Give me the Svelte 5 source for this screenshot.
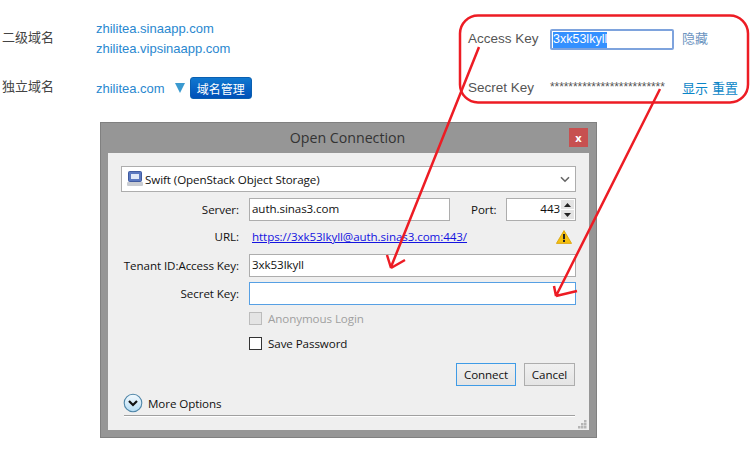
<script>
  const secret = '*'.repeat(25);
</script>

<div class="page">
  <div class="top">
    <div class="domains">
      <div class="dlabel first">二级域名</div>
      <div class="dvalues">
        <a href="#a">zhilitea.sinaapp.com</a>
        <a href="#b">zhilitea.vipsinaapp.com</a>
      </div>
      <div class="dlabel second">独立域名</div>
      <div class="dvalue2">
        <a href="#c">zhilitea.com</a>
        <span class="tri"></span>
        <button class="manage">域名管理</button>
      </div>
    </div>
    <div class="keys">
      <div class="krow one">
        <span class="kl">Access Key</span>
        <div class="kinput"><span class="sel">3xk53lkyll</span></div>
        <a class="muted" href="#h">隐藏</a>
      </div>
      <div class="krow two">
        <span class="kl">Secret Key</span>
        <span class="stars">{secret}</span>
        <a class="blue" href="#s">显示</a>
        <a class="blue reset" href="#r">重置</a>
      </div>
    </div>
  </div>

  <div class="dialog">
    <div class="titlebar">
      <span class="title">Open Connection</span>
      <span class="close">x</span>
    </div>
    <div class="content">
      <div class="select">
        <svg class="disk" width="18" height="16" viewBox="0 0 18 16">
          <rect x="2.5" y="0.5" width="13" height="10" rx="1" fill="#5a78c0" stroke="#3f5aa0"/>
          <rect x="5" y="3" width="8" height="5" fill="#dfe8f8"/>
          <rect x="1" y="11" width="16" height="4" rx="1" fill="#c9ccd2"/>
        </svg>
        <span>Swift (OpenStack Object Storage)</span>
        <svg class="chev" width="10" height="7" viewBox="0 0 10 7"><path d="M1 1.2 5 5.2 9 1.2" fill="none" stroke="#666" stroke-width="1.6"/></svg>
      </div>

      <div class="form">
        <div class="lbl">Server:</div>
        <div class="serverline">
          <div class="field server">auth.sinas3.com</div>
          <span class="portl">Port:</span>
          <div class="field port">
            <span class="pnum">443</span>
            <span class="spin">
              <span class="sb"><svg width="7" height="4" viewBox="0 0 7 4"><path d="M3.5 0 7 4H0z" fill="#222"/></svg></span>
              <span class="sb"><svg width="7" height="4" viewBox="0 0 7 4"><path d="M0 0h7L3.5 4z" fill="#222"/></svg></span>
            </span>
          </div>
        </div>

        <div class="lbl urlr">URL:</div>
        <div class="urlline urlr">
          <a href="#u">https://3xk53lkyll@auth.sinas3.com:443/</a>
          <svg width="16" height="14" viewBox="0 0 16 14">
            <path d="M8 .6 15.6 13.4H.4z" fill="#f5c010" stroke="#d8a000" stroke-width=".8" stroke-linejoin="round"/>
            <rect x="7" y="4" width="2" height="5.2" fill="#222"/>
            <rect x="7" y="10" width="2" height="2" fill="#222"/>
          </svg>
        </div>

        <div class="lbl r3">Tenant ID:Access Key:</div>
        <div class="field r3">3xk53lkyll</div>

        <div class="lbl r4">Secret Key:</div>
        <div class="field focus r4"></div>

        <div class="check dis r5"><span class="box"></span>Anonymous Login</div>
        <div class="check r6"><span class="box"></span>Save Password</div>
      </div>

      <div class="actions">
        <button class="btn primary">Connect</button>
        <button class="btn">Cancel</button>
      </div>

      <div class="more">
        <svg width="20" height="20" viewBox="0 0 20 20">
          <defs>
            <linearGradient id="mo" x1="0" y1="0" x2="0" y2="1">
              <stop offset="0" stop-color="#f4fafe"/>
              <stop offset="1" stop-color="#b5dcf4"/>
            </linearGradient>
          </defs>
          <circle cx="10" cy="10" r="8.8" fill="url(#mo)" stroke="#4f86a8" stroke-width="1.1"/>
          <path d="M6 8 10 12 14 8" fill="none" stroke="#111" stroke-width="2.2"/>
        </svg>
        <span>More Options</span>
      </div>
      <div class="rule"></div>
      <svg class="grip" width="9" height="9" viewBox="0 0 9 9" fill="#b5b5b5">
        <rect x="6" y="0" width="2.5" height="2.5"/>
        <rect x="3" y="3" width="2.5" height="2.5"/><rect x="6" y="3" width="2.5" height="2.5"/>
        <rect x="0" y="6" width="2.5" height="2.5"/><rect x="3" y="6" width="2.5" height="2.5"/><rect x="6" y="6" width="2.5" height="2.5"/>
      </svg>
    </div>
  </div>

  <svg class="notes" width="756" height="450" viewBox="0 0 756 450" fill="none" stroke="#ed1c24" stroke-width="2.5">
    <rect x="460" y="15.5" width="288" height="87" rx="18"/>
    <path d="M479 47 391 267M391 268 405 260M391 268 387 255"/>
    <path d="M660 89 556 296M556 296 577 291M556 296 554 286"/>
  </svg>
</div>

<style>
  :global(body) { margin: 0; background: #fff; }
  .page { position: relative; width: 756px; height: 450px; overflow: hidden; font-family: "Liberation Sans", "Noto Sans CJK SC", sans-serif; }
  a { text-decoration: none; }

  .top { display: flex; height: 122px; }
  .domains { width: 466px; margin-left: 2px; padding-top: 19px; box-sizing: border-box; display: grid; grid-template-columns: 94px 1fr; grid-template-rows: 40px 46px; row-gap: 0; align-content: start; }
  .dlabel { font-size: 13px; color: #444; white-space: nowrap; }
  .dlabel.first { padding-top: 10px; line-height: 18px; }
  .dlabel.second { padding-top: 19px; line-height: 18px; }
  .dvalues { display: flex; flex-direction: column; gap: 4px; font-size: 13px; line-height: 16px; padding-top: 2px; }
  .dvalues a, .dvalue2 a { color: #2a88cf; }
  .dvalue2 { display: flex; align-items: center; font-size: 13px; padding-top: 12px; }
  .tri { width: 0; height: 0; margin-left: 10px; border-left: 5.5px solid transparent; border-right: 5.5px solid transparent; border-top: 10px solid #3b9ad0; }
  .manage { margin-left: 5px; width: 62px; height: 22px; padding: 0; border: 1px solid #0a5fb0; border-radius: 3px; background: linear-gradient(#1078d0, #0050b8); color: #fff; font: 12px "Noto Sans CJK SC", sans-serif; }

  .keys { font-size: 13.5px; color: #555; }
  .krow { display: flex; align-items: center; height: 22px; }
  .krow.one { margin-top: 28px; }
  .krow.two { margin-top: 27px; }
  .kl { width: 82px; margin-top: -2px; }
  .kinput { width: 124px; height: 21px; box-sizing: border-box; border: 2px solid #7ea3dd; border-radius: 2px; padding: 1px 0 0 1px; line-height: 15px; font-size: 12.5px; }
  .sel { background: #3390ff; color: #fff; display: inline-block; height: 16px; }
  .muted { margin-left: 8px; margin-top: -3px; font-size: 13px; color: #6c94bf; }
  .stars { width: 132px; font-size: 12px; color: #555; height: 14px; line-height: 14px; margin-top: -3px; letter-spacing: -.08px; }
  .blue { font-size: 13px; color: #0a85c7; margin-top: -2px; }
  .reset { margin-left: 4px; }

  .dialog { margin-left: 100px; width: 497px; height: 316px; box-sizing: border-box; border: 1px solid #808080; background: #969696; display: flex; flex-direction: column; font-family: "Open Sans", "Noto Sans", sans-serif; font-size: 11.6px; letter-spacing: -.08px; color: #111; white-space: nowrap; }
  .titlebar { height: 30px; flex: none; position: relative; display: flex; justify-content: center; align-items: center; }
  .title { font-size: 14.2px; letter-spacing: 0; color: #333; margin-left: -2px; margin-top: -1px; }
  .close { position: absolute; right: 8px; top: 5px; width: 19px; height: 19px; background: #c75050; color: #fff; font-size: 11px; font-weight: 700; display: flex; align-items: center; justify-content: center; line-height: 1; }
  .content { position: relative; flex: none; width: 481px; height: 277px; margin-left: 7px; box-sizing: border-box; padding: 13px 13px 0; background: #efefef; }

  .select { display: flex; align-items: center; height: 26px; box-sizing: border-box; border: 1px solid #adadad; background: #fff; padding: 0 4px 0 4px; }
  .disk { margin-right: 1px; }
  .select span { flex: 1; }
  .chev { margin-right: 1px; }

  .form { display: grid; grid-template-columns: 118px 1fr; column-gap: 10px; margin-top: 6px; align-items: center; }
  .lbl { text-align: right; }
  .field { height: 23px; box-sizing: border-box; border: 1px solid #adadad; background: #fff; padding-left: 2px; line-height: 20px; }
  .field.focus { border-color: #56a0e4; }
  .serverline { display: flex; align-items: center; }
  .server { width: 201px; }
  .portl { margin-left: 21px; width: 35px; }
  .port { width: 70px; display: flex; justify-content: flex-end; padding-left: 0; }
  .pnum { margin-right: 1px; }
  .spin { display: flex; flex-direction: column; gap: 1px; padding: 1px 1px 0 0; }
  .sb { width: 13px; height: 9px; background: #e4e4e4; display: flex; align-items: center; justify-content: center; }
  .urlr { height: 22px; margin-top: 5px; line-height: 22px; }
  .urlline { display: flex; justify-content: space-between; align-items: center; padding: 0 4px 0 3px; }
  .urlline a { color: #1414e0; text-decoration: underline; }
  .r3 { margin-top: 6px; }
  .r4 { margin-top: 5px; }
  .check { grid-column: 2; display: flex; align-items: center; height: 13px; }
  .r5 { margin-top: 7px; }
  .r6 { margin-top: 12px; }
  .box { width: 13px; height: 13px; box-sizing: border-box; border: 1px solid #333; background: #fff; margin-right: 6px; }
  .dis { color: #a0a0a0; }
  .dis .box { border-color: #bcbcbc; background: #e4e4e4; }

  .actions { display: flex; justify-content: flex-end; gap: 8px; margin-top: 13px; padding-right: 1px; }
  .btn { width: 51px; height: 23px; padding: 0; box-sizing: border-box; border: 1px solid #adadad; background: linear-gradient(#f0f0f0, #e4e4e4); font: inherit; letter-spacing: inherit; color: #111; }
  .primary { width: 60px; border-color: #3f9be6; }
  .more { display: flex; align-items: center; gap: 5px; margin: 7px 0 0 2px; height: 20px; }
  .rule { height: 1px; background: #a0a0a0; border-bottom: 1px solid #fff; margin: 2px 1px 0 3px; }
  .grip { position: absolute; right: 2px; bottom: 1px; }
  .notes { position: absolute; inset: 0; pointer-events: none; }
</style>
